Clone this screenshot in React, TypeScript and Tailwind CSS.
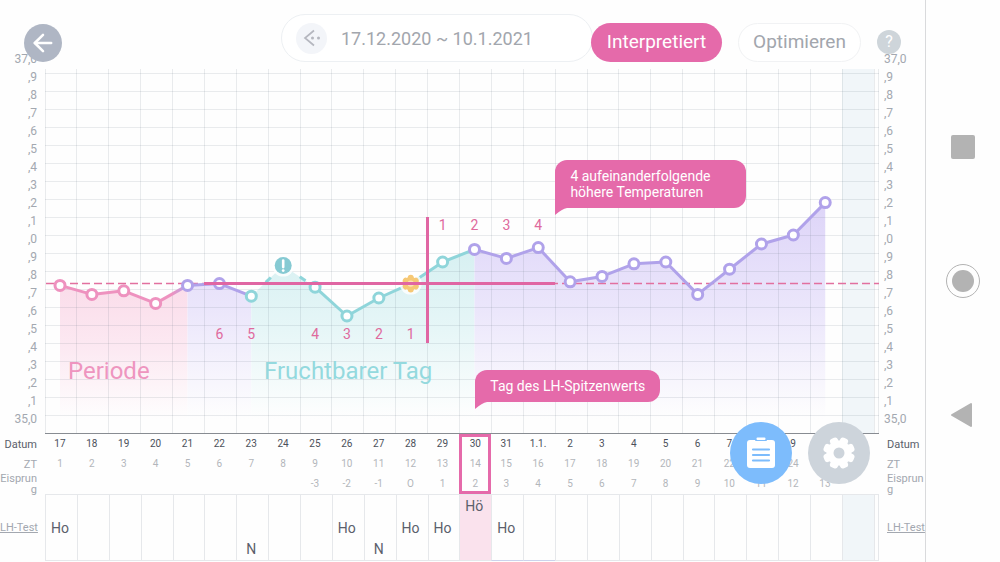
import React from 'react';
import { ArrowLeft } from 'lucide-react';

type Phase = 'period' | 'neutral' | 'fertile';

interface Day {
  date: string;
  ovulation?: string;
  temp?: number;
  phase?: Phase;
  marker?: 'excluded' | 'ovulation';
  lh?: string;
  level?: number;
}

const days: Day[] = [
  { date: '17', temp: 35.72, phase: 'period', lh: 'Ho', level: 1 },
  { date: '18', temp: 35.67, phase: 'period' },
  { date: '19', temp: 35.69, phase: 'period' },
  { date: '20', temp: 35.62, phase: 'period' },
  { date: '21', temp: 35.72, phase: 'neutral' },
  { date: '22', temp: 35.73, phase: 'neutral' },
  { date: '23', temp: 35.66, phase: 'fertile', lh: 'N', level: 2 },
  { date: '24', temp: 35.83, phase: 'fertile', marker: 'excluded' },
  { date: '25', ovulation: '-3', temp: 35.71, phase: 'fertile' },
  { date: '26', ovulation: '-2', temp: 35.55, phase: 'fertile', lh: 'Ho', level: 1 },
  { date: '27', ovulation: '-1', temp: 35.65, phase: 'fertile', lh: 'N', level: 2 },
  { date: '28', ovulation: 'O', temp: 35.73, phase: 'fertile', marker: 'ovulation', lh: 'Ho', level: 1 },
  { date: '29', ovulation: '1', temp: 35.85, phase: 'fertile', lh: 'Ho', level: 1 },
  { date: '30', ovulation: '2', temp: 35.92, phase: 'neutral', lh: 'Hö', level: 0 },
  { date: '31', ovulation: '3', temp: 35.87, phase: 'neutral', lh: 'Ho', level: 1 },
  { date: '1.1.', ovulation: '4', temp: 35.93, phase: 'neutral' },
  { date: '2', ovulation: '5', temp: 35.74, phase: 'neutral' },
  { date: '3', ovulation: '6', temp: 35.77, phase: 'neutral' },
  { date: '4', ovulation: '7', temp: 35.84, phase: 'neutral' },
  { date: '5', ovulation: '8', temp: 35.85, phase: 'neutral' },
  { date: '6', ovulation: '9', temp: 35.67, phase: 'neutral' },
  { date: '7', ovulation: '10', temp: 35.81, phase: 'neutral' },
  { date: '8', ovulation: '11', temp: 35.95, phase: 'neutral' },
  { date: '9', ovulation: '12', temp: 36.0, phase: 'neutral' },
  { date: '10', ovulation: '13', temp: 36.18, phase: 'neutral' },
  { date: '' },
];

const PEAK = 13;
const W = 834;
const H = 365;
const STEP = 829 / 26;

const colors: Record<Phase, string> = {
  period: '#ee92bf',
  neutral: '#b0a2ea',
  fertile: '#8fd5da',
};

const scale = [
  '37,0', ',9', ',8', ',7', ',6', ',5', ',4', ',3', ',2', ',1', ',0',
  ',9', ',8', ',7', ',6', ',5', ',4', ',3', ',2', ',1', '35,0',
];

const px = (i: number) => 15 + i * STEP;
const py = (t: number) => 346 - (t - 35) * 180;

const points = days
  .filter((d) => d.temp !== undefined)
  .map((d, i) => ({ ...d, x: px(i), y: py(d.temp as number) }));

const areas = [
  { from: 0, to: 4, fill: 'url(#fillPeriod)' },
  { from: 4, to: 6, fill: 'url(#fillNeutral)' },
  { from: 6, to: 13, fill: 'url(#fillFertile)' },
  { from: 13, to: 24, fill: 'url(#fillNeutral)' },
];

const counts = [
  { n: 6, i: 5, y: 270 },
  { n: 5, i: 6, y: 270 },
  { n: 4, i: 8, y: 270 },
  { n: 3, i: 9, y: 270 },
  { n: 2, i: 10, y: 270 },
  { n: 1, i: 11, y: 270 },
  { n: 1, i: 12, y: 161 },
  { n: 2, i: 13, y: 161 },
  { n: 3, i: 14, y: 161 },
  { n: 4, i: 15, y: 161 },
];

const areaPath = (from: number, to: number) => {
  const part = points.slice(from, to + 1);
  return `M${part[0].x} 350 ${part.map((p) => `L${p.x} ${p.y}`).join(' ')} L${part[part.length - 1].x} 350 Z`;
};

const Marker: React.FC<{ x: number; y: number; day: Day }> = ({ x, y, day }) => {
  if (day.marker === 'excluded') {
    return (
      <g transform={`translate(${x} ${y})`}>
        <circle r="11" fill="#fff" opacity="0.8" />
        <circle r="8.5" fill="#86cad3" />
        <path d="M0 -5V1.5" stroke="#fff" strokeWidth="2.6" strokeLinecap="round" />
        <circle cy="5" r="1.4" fill="#fff" />
      </g>
    );
  }
  if (day.marker === 'ovulation') {
    return (
      <g transform={`translate(${x} ${y})`}>
        <circle r="11" fill="#fff" opacity="0.8" />
        <g fill="#f6c875">
          <circle r="6.8" />
          {[30, 90, 150, 210, 270, 330].map((a) => (
            <circle key={a} cx="5.8" r="3" transform={`rotate(${a})`} />
          ))}
        </g>
        <circle r="3.2" fill="#fbe3b5" />
      </g>
    );
  }
  return <circle cx={x} cy={y} r="5" fill="#fff" stroke={colors[day.phase as Phase]} strokeWidth="3" />;
};

const Scale: React.FC<{ side: 'left' | 'right' }> = ({ side }) => (
  <div
    className={`-mt-5 pt-px pb-1.5 flex flex-col shrink-0 text-xs text-[#a3a8b0] ${
      side === 'left' ? 'w-[45px] pr-2 text-right' : 'w-[46px] pl-[5px] text-left'
    }`}
  >
    {scale.map((s, i) => (
      <div key={i} className="flex-1 leading-[18px]">{s}</div>
    ))}
  </div>
);

const Bubble: React.FC<{ className: string; children: React.ReactNode }> = ({ className, children }) => (
  <div className={`absolute bg-[#e56aaa] text-white text-sm leading-4 rounded-xl rounded-bl-none px-[15px] py-2 ${className}`}>
    {children}
    <svg className="absolute left-0 top-full" width="14" height="8" viewBox="0 0 14 8" aria-hidden="true">
      <path d="M0 0H12Q7 1 0 7Z" fill="#e56aaa" />
    </svg>
  </div>
);

const Chart: React.FC = () => (
  <div className="relative flex-1">
    <svg viewBox={`0 0 ${W} ${H}`} className="block w-full h-auto" role="img" aria-label="Temperaturkurve">
      <defs>
        <linearGradient id="fillPeriod" gradientUnits="userSpaceOnUse" x1="0" y1="210" x2="0" y2="350">
          <stop offset="0" stopColor="#fadbe9" />
          <stop offset="0.5" stopColor="#fce9f2" />
          <stop offset="1" stopColor="#fefefe" />
        </linearGradient>
        <linearGradient id="fillNeutral" gradientUnits="userSpaceOnUse" x1="0" y1="130" x2="0" y2="350">
          <stop offset="0" stopColor="#ddd4f8" />
          <stop offset="0.5" stopColor="#ebe6fb" />
          <stop offset="1" stopColor="#fefefe" />
        </linearGradient>
        <linearGradient id="fillFertile" gradientUnits="userSpaceOnUse" x1="0" y1="170" x2="0" y2="350">
          <stop offset="0" stopColor="#d5eff1" />
          <stop offset="0.5" stopColor="#e6f6f7" />
          <stop offset="1" stopColor="#fefefe" />
        </linearGradient>
        <linearGradient id="toNeutral" gradientUnits="userSpaceOnUse" x1={px(3)} y1="0" x2={px(4)} y2="0">
          <stop offset="0.5" stopColor="#ee92bf" />
          <stop offset="1" stopColor="#b0a2ea" />
        </linearGradient>
      </defs>

      <rect x={25 * STEP} y="0" width={STEP} height="364" fill="#f1f6f9" />
      {areas.map((a) => (
        <path key={a.from} d={areaPath(a.from, a.to)} fill={a.fill} />
      ))}

      <g stroke="#5a6a78" strokeOpacity="0.13">
        {Array.from({ length: 20 }, (_, k) => (
          <path key={k} d={`M0 ${4.5 + k * 18}H${W}`} />
        ))}
        {Array.from({ length: 27 }, (_, k) => (
          <path key={k} d={`M${Math.floor(k * STEP) + 0.5} 0V364`} />
        ))}
        <path d="M833.5 0V364" />
      </g>
      <path d={`M0 364.5H${W}`} stroke="#888c92" />

      <path d={`M1 214.5H${W}`} stroke="#e2709f" strokeWidth="1.5" strokeDasharray="8 4" />

      <g fill="none" strokeWidth="3">
        {points.slice(1).map((p, i) => {
          const q = points[i];
          const gap = q.marker === 'excluded' || p.marker === 'excluded';
          let stroke = colors[q.phase as Phase];
          if (i === 3) stroke = 'url(#toNeutral)';
          return (
            <path
              key={i}
              d={`M${q.x} ${q.y}L${p.x} ${p.y}`}
              stroke={stroke}
              strokeDasharray={gap ? '7 100' : undefined}
              strokeDashoffset={gap ? -20 : undefined}
            />
          );
        })}
      </g>
      {points.map((p, i) => (
        <Marker key={i} x={p.x} y={p.y} day={p} />
      ))}

      <g stroke="#e066a3" fill="none">
        <path d="M159 214.5H510" strokeWidth="3" />
        <path d="M382.5 148V274" strokeWidth="3" />
      </g>

      <g fill="#df6a9d" fontSize="14" textAnchor="middle">
        {counts.map((c) => (
          <text key={c.i} x={px(c.i)} y={c.y}>{c.n}</text>
        ))}
      </g>
      <g fontSize="24">
        <text x="23" y="310" fill="#ee95bf">Periode</text>
        <text x="219" y="310" fill="#94d9de">Fruchtbarer Tag</text>
      </g>
    </svg>
    <Bubble className="left-[61.2%] top-[25%] w-[191px]">4 aufeinanderfolgende höhere Temperaturen</Bubble>
    <Bubble className="left-[51.6%] top-[82.5%] whitespace-nowrap">Tag des LH-Spitzenwerts</Bubble>
  </div>
);

const RowHead: React.FC<{ side: 'left' | 'right'; className?: string; children: React.ReactNode }> = ({
  side,
  className = 'text-[#a3a8b0]',
  children,
}) => (
  <th
    scope="row"
    className={`py-0 text-[11px] leading-[11px] font-normal ${side === 'left' ? 'text-right pl-0 pr-2' : 'text-left pl-2 pr-0'} ${className}`}
  >
    {children}
  </th>
);

const levelPadding = ['pt-0', 'pt-[22px]', 'pt-[43px]'];

const DayTable: React.FC = () => (
  <table className="w-full table-fixed border-separate border-spacing-0 text-center">
    <colgroup>
      <col className="w-[45px]" />
      {days.map((_, i) => <col key={i} />)}
      <col className="w-[5px]" />
      <col className="w-[46px]" />
    </colgroup>
    <tbody>
      <tr className="h-5 text-[10px] leading-3 text-[#4b505a]">
        <RowHead side="left" className="text-[#5a606b]">Datum</RowHead>
        {days.map((d, i) => (
          <td
            key={i}
            className={i === PEAK ? 'px-0 pt-0 pb-[3px] border-x-3 border-t-3 border-[#e56aaa]' : 'py-0 pl-0 pr-0.5'}
          >
            {d.date}
          </td>
        ))}
        <td className="p-0" />
        <RowHead side="right" className="text-[#5a606b]">Datum</RowHead>
      </tr>
      <tr className="h-5 text-[10px] leading-3 text-[#b3b6bb]">
        <RowHead side="left">ZT</RowHead>
        {days.map((d, i) => (
          <td key={i} className={i === PEAK ? 'p-0 border-x-3 border-[#e56aaa]' : 'py-0 pl-0 pr-0.5'}>{d.date && i + 1}</td>
        ))}
        <td className="p-0" />
        <RowHead side="right">ZT</RowHead>
      </tr>
      <tr className="h-5 text-[10px] leading-3 text-[#b3b6bb]">
        <RowHead side="left">
          <div className="-my-1 break-all">Eisprung</div>
        </RowHead>
        {days.map((d, i) => (
          <td
            key={i}
            className={i === PEAK ? 'px-0 pb-0 pt-[3px] border-x-3 border-b-3 border-[#e56aaa]' : 'py-0 pl-0 pr-0.5'}
          >
            {d.ovulation}
          </td>
        ))}
        <td className="p-0" />
        <RowHead side="right">
          <div className="-my-1 break-all">Eisprung</div>
        </RowHead>
      </tr>
      <tr className="h-[67px] text-sm leading-[22px] text-[#5b606c]">
        <RowHead side="left">
          <a href="#lh-test" className="underline whitespace-nowrap">LH-Test</a>
        </RowHead>
        {days.map((d, i) => (
          <td
            key={i}
            className={`py-0 pl-0 pr-[3px] align-top border-y border-l border-y-[#e6e8eb] border-l-[#e6e8eb] ${
              i === PEAK ? 'bg-[#fae2ed]' : i === 25 ? 'bg-[#f1f6f9]' : ''
            } ${i === 14 || i === 15 ? 'border-b-[#ccd3ec]' : ''}`}
          >
            <div className={levelPadding[d.level ?? 0]}>{d.lh}</div>
          </td>
        ))}
        <td className="p-0 border border-[#e6e8eb]" />
        <RowHead side="right">
          <a href="#lh-test" className="underline whitespace-nowrap">LH-Test</a>
        </RowHead>
      </tr>
    </tbody>
  </table>
);

const Header: React.FC = () => (
  <header className="relative z-10 h-[69px] pl-6 pr-6 pb-[7px] flex items-end">
    <button aria-label="Zurück" className="size-[38px] mr-auto rounded-full bg-[#afb6c4] text-white flex items-center justify-center">
      <ArrowLeft size={28} strokeWidth={2.2} />
    </button>
    <div className="w-[312px] h-12 pl-[14px] rounded-full border border-[#edf0f3] bg-white flex items-center gap-[14px]">
      <button aria-label="Vorheriger Zyklus" className="size-[31px] rounded-full bg-[#f3f5f9] flex items-center justify-center">
        <svg width="20" height="20" viewBox="0 0 20 20" fill="none" aria-hidden="true">
          <path d="M12 2.5L3 10L12 17.5" stroke="#b5b7bf" strokeWidth="1.7" />
          <circle cx="10.5" cy="10" r="1.5" fill="#b5b7bf" />
          <circle cx="16.5" cy="10" r="1.5" fill="#b5b7bf" />
        </svg>
      </button>
      <span className="pt-0.5 text-lg text-[#a2a6ad]">17.12.2020 ~ 10.1.2021</span>
    </div>
    <button className="w-[131px] h-[39px] -ml-0.5 rounded-full bg-[#e56aaa] text-white text-[19px]">Interpretiert</button>
    <button className="w-[123px] h-[39px] ml-4 rounded-full border border-[#f1f2f4] bg-white text-[#a2a6ad] text-[19px]">Optimieren</button>
    <button aria-label="Hilfe" className="size-6 ml-4 mb-2 rounded-full bg-[#ced5da] text-white text-base leading-6">?</button>
  </header>
);

const FloatingActions: React.FC = () => (
  <div className="absolute -top-3 right-[55px] flex gap-4">
    <button aria-label="Einträge" className="size-[62px] rounded-full bg-[#7dbcfc] flex items-center justify-center">
      <svg width="28" height="32" viewBox="0 0 28 32" aria-hidden="true">
        <rect x="0" y="3" width="28" height="28" rx="3" fill="#fff" />
        <rect x="8" y="-1" width="12" height="5" rx="1" fill="#7dbcfc" />
        <rect x="9.5" y="0.5" width="9" height="2.5" rx="1" fill="#fff" />
        <path d="M6 12.5H22M6 18H22M6 23.5H22" stroke="#7dbcfc" strokeWidth="2.2" strokeLinecap="round" />
      </svg>
    </button>
    <button aria-label="Einstellungen" className="size-[62px] rounded-full bg-[#cdd4db] flex items-center justify-center">
      <svg width="32" height="32" viewBox="-16 -16 32 32" aria-hidden="true">
        <g fill="#fff">
          <circle r="12.5" />
          {[22.5, 67.5, 112.5, 157.5, 202.5, 247.5, 292.5, 337.5].map((a) => (
            <rect key={a} x="8" y="-4.2" width="8" height="8.4" rx="3" transform={`rotate(${a})`} />
          ))}
        </g>
        <circle r="5.5" fill="#cdd4db" />
      </svg>
    </button>
  </div>
);

const SystemNav: React.FC = () => (
  <nav className="w-[75px] shrink-0 h-screen sticky top-0 border-l border-[#d9dadc] flex flex-col items-center justify-center gap-[100px]">
    <button aria-label="Übersicht" className="size-[34px] flex items-center justify-center">
      <span className="size-6 rounded-xs bg-[#b3b3b3]" />
    </button>
    <button aria-label="Start" className="size-[34px] rounded-full border border-[#b3b3b3] flex items-center justify-center">
      <span className="size-[22px] rounded-full bg-[#b3b3b3]" />
    </button>
    <button aria-label="Zurück" className="size-[34px] flex items-center justify-center">
      <svg width="26" height="26" viewBox="0 0 26 26" aria-hidden="true">
        <path d="M2 13L21 2V24Z" fill="#b3b3b3" stroke="#b3b3b3" strokeWidth="2" strokeLinejoin="round" />
      </svg>
    </button>
  </nav>
);

const App: React.FC = () => (
  <div className="min-h-screen flex bg-[#fefefe] font-['Roboto',sans-serif]">
    <main className="flex-1 min-w-0">
      <Header />
      <div className="flex">
        <Scale side="left" />
        <Chart />
        <Scale side="right" />
      </div>
      <div className="relative">
        <DayTable />
        <FloatingActions />
      </div>
    </main>
    <SystemNav />
  </div>
);

export default App;
